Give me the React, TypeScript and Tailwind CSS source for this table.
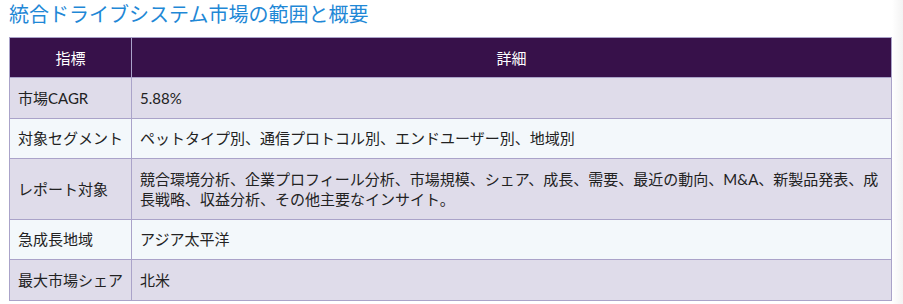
const rows: { label: string; value: string }[] = [
  { label: "市場CAGR", value: "5.88%" },
  { label: "対象セグメント", value: "ペットタイプ別、通信プロトコル別、エンドユーザー別、地域別" },
  {
    label: "レポート対象",
    value:
      "競合環境分析、企業プロフィール分析、市場規模、シェア、成長、需要、最近の動向、M&A、新製品発表、成長戦略、収益分析、その他主要なインサイト。",
  },
  { label: "急成長地域", value: "アジア太平洋" },
  { label: "最大市場シェア", value: "北米" },
];

export default function App() {
  return (
    <div
      className="min-h-[304px] pl-[9px] pr-[12px] bg-[linear-gradient(to_right,#ffffff_892px,#f3f3f3)]"
      style={{ fontFamily: "Lato, 'Noto Sans CJK JP', sans-serif" }}
    >
      <h2 className="text-[20px] leading-[28px] text-[#1f88d6] mb-[9px]">
        統合ドライブシステム市場の範囲と概要
      </h2>
      <table className="w-[883px] border-collapse text-[15px] leading-[20px] text-[#222]">
        <thead>
          <tr className="bg-[#37114a] text-white">
            <th className="w-[122px] h-[40px] p-0 border border-[#aaa3c9] font-normal text-center">指標</th>
            <th className="h-[40px] p-0 border border-[#aaa3c9] font-normal text-center">詳細</th>
          </tr>
        </thead>
        <tbody>
          {rows.map((r, i) => (
            <tr key={r.label} className={i % 2 === 0 ? "bg-[#dfdcea]" : "bg-[#f3f8fb]"}>
              <td className="border border-[#aaa3c9] px-[8px] py-[9.75px] align-middle whitespace-nowrap">
                {r.label}
              </td>
              <td className="border border-[#aaa3c9] px-[8px] py-[9.75px] align-middle">{r.value}</td>
            </tr>
          ))}
        </tbody>
      </table>
    </div>
  );
}
